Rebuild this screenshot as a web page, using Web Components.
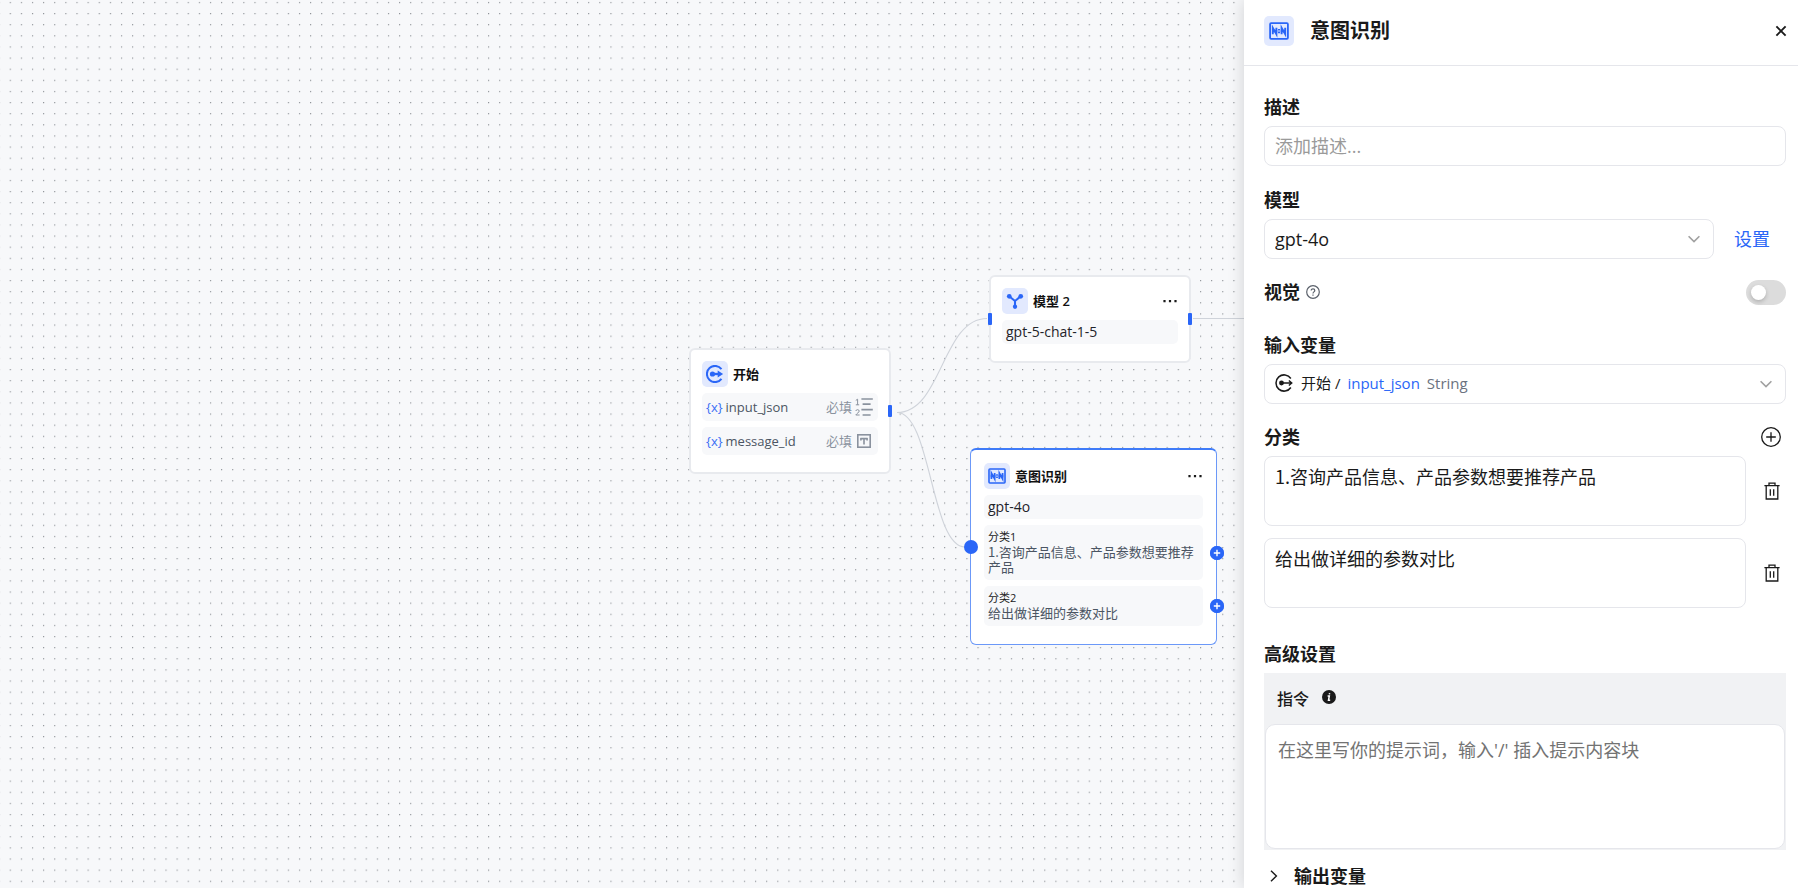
<!DOCTYPE html>
<html lang="zh-CN">
<head>
<meta charset="utf-8">
<title>意图识别</title>
<style>
  html, body { margin: 0; height: 100%; }
  body {
    font-family: "Open Sans", "Noto Sans CJK SC", sans-serif;
    color: #1a1a1a;
    overflow: hidden;
  }
</style>
</head>
<body>
<workflow-app></workflow-app>

<script>
const ICONS = {
  intent: ['0 0 20 20', `
    <rect x="1.1" y="2.2" width="17.8" height="15.6" rx="1" fill="none" stroke="currentColor" stroke-width="1.8"/>
    <path d="M3.8 13.2V6.8l3.6 6.4V6.8M12.6 13.2V6.8l3.6 6.4V6.8" fill="none" stroke="currentColor" stroke-width="1.9"/>
    <path d="M3 8.7h5.2v2.6H3zM11.8 8.7H17v2.6h-5.2zM9 8h2v1.6H9zM9 10.6h2v1.6H9z" fill="currentColor"/>`],
  model: ['0 0 20 20', `
    <path d="M4.2 5.2 10 10l5.8-4.8M10 10v6" fill="none" stroke="currentColor" stroke-width="2.3"/>
    <g fill="currentColor"><circle cx="3.6" cy="4.8" r="2.6"/><circle cx="16.4" cy="4.8" r="2.6"/><circle cx="10" cy="16.4" r="2.4"/></g>`],
  start: ['0 0 20 20', `
    <path d="M17.2 4.6A9 9 0 1 0 17.2 15.4" fill="none" stroke="currentColor" stroke-width="2.2"/>
    <circle cx="7.2" cy="10" r="2.9" fill="currentColor"/>
    <path d="M7 10h9" stroke="currentColor" stroke-width="2.6"/><path d="M13 6.2 19 10l-6 3.8z" fill="currentColor"/>`],
  startLine: ['0 0 20 20', `
    <path d="M17.6 5A9 9 0 1 0 17.6 15" fill="none" stroke="currentColor" stroke-width="1.7"/>
    <circle cx="7.2" cy="10" r="2.7" fill="currentColor"/>
    <path d="M7 10h11.4M15.4 7.2 18.6 10l-3.2 2.8" fill="none" stroke="currentColor" stroke-width="1.6"/>`],
  close: ['0 0 12 12', `<path d="M1.4 1.4l9.2 9.2M10.6 1.4l-9.2 9.2" stroke="currentColor" stroke-width="1.9"/>`],
  down: ['0 0 12 12', `<path d="M.6 3.2 6 8.6l5.4-5.4" fill="none" stroke="currentColor" stroke-width="1.6"/>`],
  right: ['0 0 12 12', `<path d="M3 .8 8.4 6 3 11.2" fill="none" stroke="currentColor" stroke-width="1.4"/>`],
  help: ['0 0 14 14', `
    <circle cx="7" cy="7" r="6.3" fill="none" stroke="currentColor" stroke-width="1.2"/>
    <path d="M5.2 5.6c0-2.3 3.6-2.3 3.6 0 0 1.3-1.8 1.3-1.8 2.8M7 9.6v1.2" fill="none" stroke="currentColor" stroke-width="1.2"/>`],
  info: ['0 0 14 14', `
    <circle cx="7" cy="7" r="7" fill="currentColor"/>
    <path d="M5.6 6.1h1.7L6.5 10.3h1.7M7.6 3.2l-.2 1.2" fill="none" stroke="#fff" stroke-width="1.5"/>`],
  add: ['0 0 20 20', `
    <circle cx="10" cy="10" r="9.3" fill="none" stroke="currentColor" stroke-width="1.3"/>
    <path d="M10 5.2v9.6M5.2 10h9.6" stroke="currentColor" stroke-width="1.3"/>`],
  plus: ['0 0 14 14', `<circle cx="7" cy="7" r="7" fill="#2a66f7"/><path d="M7 3.8v6.4M3.8 7h6.4" stroke="#fff" stroke-width="1.4"/>`],
  trash: ['0 0 18 18', `
    <path d="M1.4 3.7h15.2M6 3.4V1.2h6v2.2M3.2 4v13h11.6V4M7.3 7.2v6.6M10.7 7.2v6.6" fill="none" stroke="currentColor" stroke-width="1.3"/>`],
  more: ['0 0 16 4', `<path d="M1.4 1h2.2v2.2H1.4zM6.9 1h2.2v2.2H6.9zM12.4 1h2.2v2.2h-2.2z" fill="currentColor"/>`],
  textType: ['0 0 14 14', `
    <rect x=".8" y=".8" width="12.4" height="12.4" fill="none" stroke="currentColor" stroke-width="1.6"/>
    <path d="M3.4 4.6h7.2M7 4.4v6.2M3.9 4v2.4M10.1 4v2.4" stroke="currentColor" stroke-width="1.6"/>`],
  list: ['0 0 18 18', `
    <path d="M6.4 1h11.4M7.6 6.2h8M6.4 11.6h11.4M7.6 17h8" stroke="currentColor" stroke-width="1.7"/>
    <path d="M.8 2.4 2.6 1.2V6.8M.8 6.8h3.4" fill="none" stroke="currentColor" stroke-width="1"/>
    <path d="M.8 13c.2-1.8 3.4-1.8 3.4 0 0 1.4-2.4 2.4-3.4 4h3.8" fill="none" stroke="currentColor" stroke-width="1"/>`],
};

class Base extends HTMLElement {
  connectedCallback() {
    if (this.shadowRoot) return;
    this.attachShadow({ mode: 'open' }).innerHTML =
      `<style>*{box-sizing:border-box}:host{box-sizing:border-box}${this.css()}</style>${this.html()}`;
  }
}

customElements.define('ui-icon', class extends Base {
  css() {
    const w = this.getAttribute('w') || 20, h = this.getAttribute('h') || w;
    return `:host{display:block;flex:none;width:${w}px;height:${h}px}svg{display:block;width:100%;height:100%}`;
  }
  html() {
    const [box, body] = ICONS[this.getAttribute('name')];
    return `<svg viewBox="${box}" aria-hidden="true">${body}</svg>`;
  }
});

customElements.define('icon-tile', class extends Base {
  css() {
    return `:host{display:flex;align-items:center;justify-content:center;flex:none;
      width:var(--tile,26px);height:var(--tile,26px);border-radius:5px;background:#e2e9fe;color:#2a66f7}`;
  }
  html() { return `<ui-icon name="${this.getAttribute('name')}" w="${this.getAttribute('w')}"></ui-icon>`; }
});

/* Card on the canvas; its place comes from --x and --y. */
customElements.define('flow-node', class extends Base {
  css() {
    return `
      :host{position:absolute;left:var(--x);top:var(--y);width:202px;background:#fff;
        border:2px solid #e8eaee;border-radius:6px;padding:11px 11px 17px;
        display:flex;flex-direction:column;gap:6px}
      :host([selected]){width:247px;border:1px solid #6b98f8;border-top:2px solid #3f7bf8;padding:13px 13px 18px}
      header{display:flex;align-items:center;gap:5px}
      h3{margin:0;flex:1;font-size:13px;line-height:20px;font-weight:600;color:#111}
      button{border:0;background:none;padding:0;display:flex;color:#1a1a1a}`;
  }
  html() {
    const more = this.hasAttribute('menu')
      ? '<button type="button" aria-label="更多"><ui-icon name="more" w="16" h="4"></ui-icon></button>' : '';
    return `<header><icon-tile name="${this.getAttribute('icon')}" w="18"></icon-tile>
      <h3>${this.getAttribute('title-text')}</h3>${more}</header><slot></slot>`;
  }
});

customElements.define('node-row', class extends Base {
  css() {
    return `:host{display:flex;align-items:center;height:24px;padding:0 4px;border-radius:5px;background:#f7f8fa;
      font-size:14px;line-height:20px;color:#1f2329}`;
  }
  html() { return '<slot></slot>'; }
});

customElements.define('node-variable', class extends Base {
  css() {
    return `:host{display:flex;align-items:center;gap:3px;height:28px;padding:0 5px 0 4px;border-radius:5px;
        background:#f7f8fa;font-size:13px;line-height:20px;color:#4b5563}
      i{font-style:normal;color:#3b6ff5}
      b{font-weight:400;flex:1}
      em{font-style:normal;color:#8a929e}
      ui-icon{color:#8a929e}
      span{width:18px;display:flex;justify-content:center}`;
  }
  html() {
    const t = this.getAttribute('type');
    return `<i>{x}</i><b><slot></slot></b><em>必填</em><span><ui-icon name="${t}" w="${t === 'list' ? 18 : 14}"></ui-icon></span>`;
  }
});

customElements.define('node-category', class extends Base {
  css() {
    return `:host{display:block;padding:4px 4px 6px;border-radius:5px;background:#f7f8fa;color:#4b5563;
        font-size:13px;line-height:15px}
      h4{margin:0;font-size:11px;line-height:15px;font-weight:400;color:#1a1a1a}
      p{margin:0;font-family:"Noto Sans CJK SC",sans-serif;margin-right:-4px}`;
  }
  html() { return `<h4>${this.getAttribute('label')}</h4><p><slot></slot></p>`; }
});

/* Connection points lie over the card edges. */
customElements.define('node-port', class extends Base {
  css() {
    return `:host{position:absolute;left:var(--x);top:var(--y);width:4px;height:12px;background:#2a66f7;border-radius:1px}
      :host([round]),:host([plus]){width:14px;height:14px;border-radius:7px}`;
  }
  html() { return this.hasAttribute('plus') ? '<ui-icon name="plus" w="14"></ui-icon>' : ''; }
});

customElements.define('flow-canvas', class extends Base {
  css() {
    return `:host{display:block;position:relative;overflow:hidden;background:#f7f8fa}
      svg{position:absolute;inset:0;width:100%;height:100%}`;
  }
  html() {
    return `
      <svg aria-hidden="true">
        <defs><pattern id="dots" x="9.7" y="1.9" width="11.124" height="11.124" patternUnits="userSpaceOnUse">
          <circle cx=".6" cy=".6" r=".6" fill="#74787f"/></pattern></defs>
        <rect width="100%" height="100%" fill="url(#dots)"/>
        <g fill="none" stroke="#cfd3da" stroke-width="1.1">
          <path d="M897 412.5C942 412.5 942 318.5 987 318.5"/>
          <path d="M897 412.5C931 412.5 931 547 965 547"/>
          <path d="M1193 318.5H1900"/>
        </g>
      </svg>
      <flow-node style="--x:689px;--y:348px" icon="start" title-text="开始">
        <node-variable type="list">input_json</node-variable>
        <node-variable type="textType">message_id</node-variable>
      </flow-node>
      <flow-node style="--x:989px;--y:275px" icon="model" title-text="模型 2" menu>
        <node-row>gpt-5-chat-1-5</node-row>
      </flow-node>
      <flow-node selected style="--x:970px;--y:448px" icon="intent" title-text="意图识别" menu>
        <node-row>gpt-4o</node-row>
        <node-category label="分类1">1.咨询产品信息、产品参数想要推荐产品</node-category>
        <node-category label="分类2">给出做详细的参数对比</node-category>
      </flow-node>
      <node-port style="--x:888px;--y:405px"></node-port>
      <node-port style="--x:988px;--y:313px"></node-port>
      <node-port style="--x:1188px;--y:313px"></node-port>
      <node-port round style="--x:964px;--y:540px"></node-port>
      <node-port plus style="--x:1210px;--y:546px"></node-port>
      <node-port plus style="--x:1210px;--y:599px"></node-port>`;
  }
});

const FIELD = `
  input,select,textarea{font:inherit;color:inherit;background:#fff;border:1px solid #e5e6eb;border-radius:8px;
    width:100%;margin:0;outline:0;display:block}
  input,select{height:40px;padding:0 10px;appearance:none}
  label,h2{display:block;margin:0;font-size:18px;line-height:26px;font-weight:700}
  button{border:0;background:none;padding:0;display:flex;color:inherit;font:inherit}`;

customElements.define('drop-down', class extends Base {
  css() {
    return `${FIELD}
      :host{display:grid;flex:1;align-items:center}
      :host>*{grid-area:1/1}
      select{padding:0 36px 0 10px;grid-area:1/1}
      :host([rich]) select{color:transparent;font-size:15px}
      ui-icon{grid-area:1/1;justify-self:end;margin-right:14px;color:#a0a0a0;pointer-events:none}
      div{grid-area:1/1;pointer-events:none;display:flex;align-items:center;padding:0 11px 2px}`;
  }
  html() {
    return `<select aria-label="${this.getAttribute('label')}"><option>${this.getAttribute('value')}</option></select>
      <div><slot></slot></div><ui-icon name="down" w="12"></ui-icon>`;
  }
});

customElements.define('toggle-switch', class extends Base {
  css() {
    return `:host{display:block}
      input{appearance:none;display:grid;align-items:center;margin:0;width:40px;height:25px;border-radius:13px;
        background:#dcdcdc;padding:0 5px}
      input::before{content:"";width:15px;height:15px;border-radius:8px;background:#fff;box-shadow:0 2px 4px #0003}
      input:checked{background:#2a66f7;justify-content:end}`;
  }
  html() { return `<input type="checkbox" role="switch" aria-label="${this.getAttribute('label')}">`; }
});

customElements.define('category-item', class extends Base {
  css() {
    return `${FIELD}
      :host{display:flex;align-items:center;gap:17px}
      textarea{flex:1;height:70px;padding:6px 10px;line-height:26px;resize:none;font-family:"Noto Sans CJK SC",sans-serif}
      button{margin-right:5px;width:18px}`;
  }
  html() {
    return `<textarea aria-label="${this.getAttribute('label')}">${this.getAttribute('value')}</textarea>
      <button type="button" aria-label="删除"><ui-icon name="trash" w="18"></ui-icon></button>`;
  }
});

customElements.define('prompt-editor', class extends Base {
  css() {
    return `${FIELD}
      :host{display:block;background:#f1f2f4;padding:0 1px 1px}
      header{display:flex;align-items:center;gap:13px;height:51px;padding:0 12px}
      label{font-size:16px;line-height:24px;font-weight:500}
      ui-icon{margin-bottom:4px}
      textarea{height:125px;border-radius:10px;padding:12px;line-height:26px;resize:none}
      textarea::placeholder{color:#737373}`;
  }
  html() {
    return `<header><label for="p">指令</label><ui-icon name="info" w="14"></ui-icon></header>
      <textarea id="p" placeholder="在这里写你的提示词，输入'/' 插入提示内容块"></textarea>`;
  }
});

customElements.define('settings-panel', class extends Base {
  css() {
    return `${FIELD}
      :host{display:flex;flex-direction:column;background:#fff;position:relative;z-index:1;
        box-shadow:0 0 16px rgba(0,0,0,.16);overflow:hidden;font-size:18px}
      header{flex:none;display:flex;align-items:center;gap:16px;height:66px;padding:0 11px 4px 20px;border-bottom:1px solid #e5e6eb}
      header h1{margin:0;flex:1;font-size:20px;line-height:30px;font-weight:700}
      icon-tile{--tile:30px}
      main{padding:28px 12px 0 20px;display:flex;flex-direction:column;gap:20px}
      section{display:flex;flex-direction:column;gap:6px}
      .row{display:flex;align-items:center}
      .row h2{flex:1}
      #desc::placeholder{color:#9a9a9a}
      .model{margin-top:1px}
      .setting{color:#2a66f7;text-decoration:none;margin:0 16px 0 20px;line-height:26px}
      .vision{gap:6px}
      .vision toggle-switch{margin-left:auto}
      .vision ui-icon{color:#5b616b}
      .vision h2{flex:none}
      .inputs{margin-top:7px}
      .value{font-size:15px;line-height:24px;display:flex;align-items:center;gap:7px}
      .value b{font-weight:400;color:#2a66f7}.value i{font-style:normal;color:#6b7280}
      .value ui-icon{margin-right:1px}
      .add{margin-right:5px}
      .list{display:flex;flex-direction:column;gap:12px}
      .advanced{margin-top:13px}
      .outputs{display:flex;align-items:center;gap:14px;margin:-7px 0 0 4px;line-height:26px;font-weight:700}`;
  }
  html() {
    return `
      <header><icon-tile name="intent" w="20"></icon-tile><h1>意图识别</h1>
        <button type="button" aria-label="关闭"><ui-icon name="close" w="12"></ui-icon></button></header>
      <main>
        <section><label for="desc">描述</label><input id="desc" type="text" placeholder="添加描述..."></section>
        <section class="model"><h2>模型</h2><div class="row"><drop-down label="模型" value="gpt-4o"></drop-down><a class="setting" href="#settings">设置</a></div></section>
        <div class="row vision"><h2>视觉</h2><ui-icon name="help" w="14"></ui-icon><toggle-switch label="视觉"></toggle-switch></div>
        <section class="inputs"><h2>输入变量</h2>
          <drop-down rich label="输入变量" value="">
            <span class="value"><ui-icon name="startLine" w="18"></ui-icon><span>开始 /</span><b>input_json</b><i>String</i></span>
          </drop-down></section>
        <section><div class="row"><h2>分类</h2><button class="add" type="button" aria-label="添加分类"><ui-icon name="add" w="20"></ui-icon></button></div>
          <div class="list">
            <category-item label="分类1" value="1.咨询产品信息、产品参数想要推荐产品"></category-item>
            <category-item label="分类2" value="给出做详细的参数对比"></category-item>
          </div></section>
        <section class="advanced"><h2>高级设置</h2><prompt-editor></prompt-editor></section>
        <button class="outputs" type="button" aria-expanded="false"><ui-icon name="right" w="12"></ui-icon>输出变量</button>
      </main>`;
  }
});

customElements.define('workflow-app', class extends Base {
  css() { return `:host{display:grid;grid-template-columns:minmax(0,1fr) 554px;grid-template-rows:100vh;height:100vh}`; }
  html() { return '<flow-canvas></flow-canvas><settings-panel></settings-panel>'; }
});
</script>
</body>
</html>
